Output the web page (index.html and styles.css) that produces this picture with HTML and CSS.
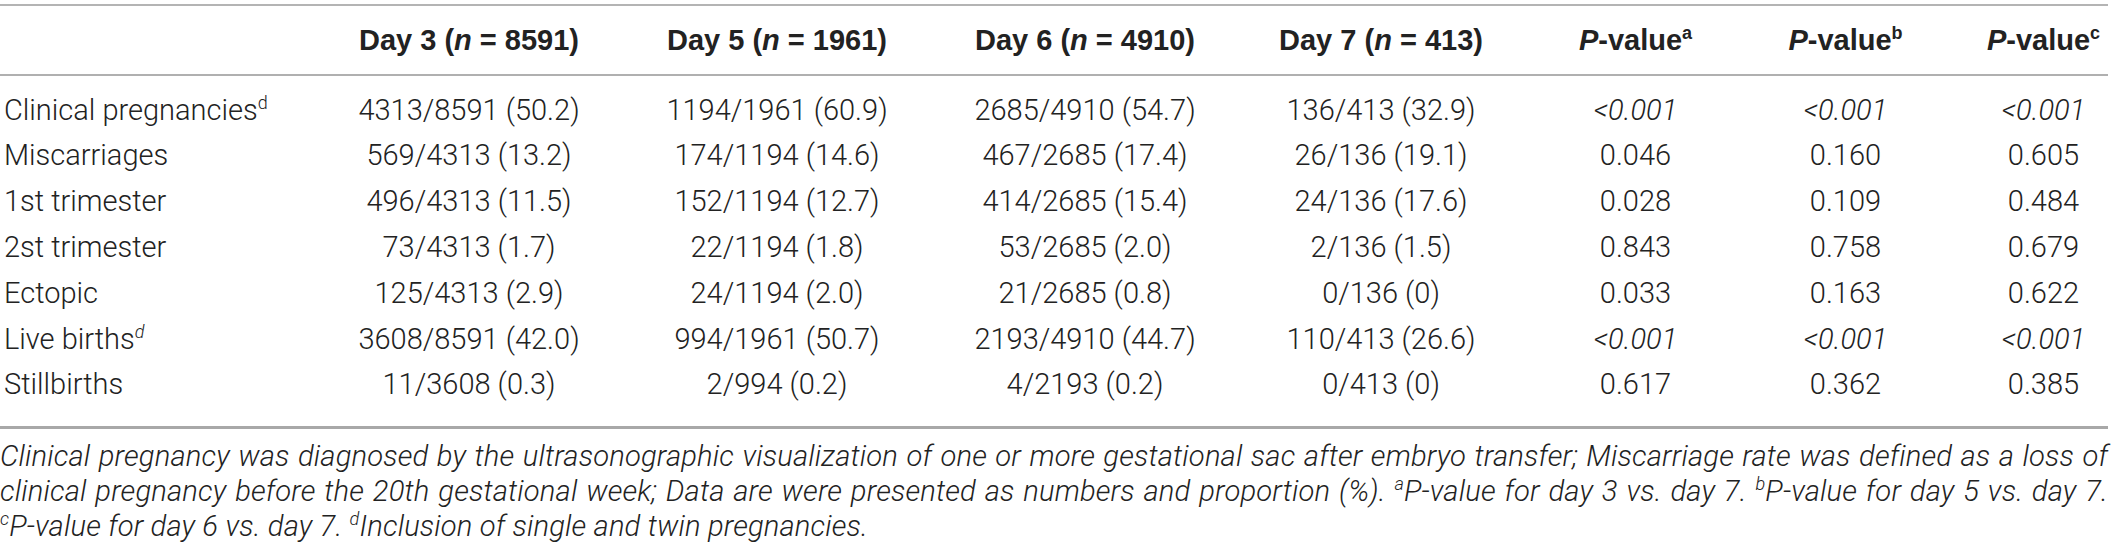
FILE: index.html
```html
<!DOCTYPE html>
<html lang="en">
<head>
    <meta charset="UTF-8">
    <title>Pregnancy outcomes by day of embryo transfer</title>
    <link rel="stylesheet" href="styles.css">
</head>
<body>
    <div class="table-wrap">
        <table class="outcomes">
            <colgroup>
                <col class="col-label">
                <col class="col-day">
                <col class="col-day">
                <col class="col-day">
                <col class="col-day7">
                <col class="col-pa">
                <col class="col-pb">
                <col class="col-pc">
            </colgroup>
            <thead>
                <tr>
                    <th class="label"></th>
                    <th>Day 3 (<i>n</i> = 8591)</th>
                    <th>Day 5 (<i>n</i> = 1961)</th>
                    <th>Day 6 (<i>n</i> = 4910)</th>
                    <th>Day 7 (<i>n</i> = 413)</th>
                    <th><i>P</i>-value<sup>a</sup></th>
                    <th><i>P</i>-value<sup>b</sup></th>
                    <th><i>P</i>-value<sup>c</sup></th>
                </tr>
            </thead>
            <tbody>
                <tr>
                    <td class="label">Clinical pregnancies<sup>d</sup></td>
                    <td>4313/8591 (50.2)</td>
                    <td>1194/1961 (60.9)</td>
                    <td>2685/4910 (54.7)</td>
                    <td>136/413 (32.9)</td>
                    <td><i>&lt;0.001</i></td>
                    <td><i>&lt;0.001</i></td>
                    <td><i>&lt;0.001</i></td>
                </tr>
                <tr>
                    <td class="label">Miscarriages</td>
                    <td>569/4313 (13.2)</td>
                    <td>174/1194 (14.6)</td>
                    <td>467/2685 (17.4)</td>
                    <td>26/136 (19.1)</td>
                    <td>0.046</td>
                    <td>0.160</td>
                    <td>0.605</td>
                </tr>
                <tr>
                    <td class="label">1st trimester</td>
                    <td>496/4313 (11.5)</td>
                    <td>152/1194 (12.7)</td>
                    <td>414/2685 (15.4)</td>
                    <td>24/136 (17.6)</td>
                    <td>0.028</td>
                    <td>0.109</td>
                    <td>0.484</td>
                </tr>
                <tr>
                    <td class="label">2st trimester</td>
                    <td>73/4313 (1.7)</td>
                    <td>22/1194 (1.8)</td>
                    <td>53/2685 (2.0)</td>
                    <td>2/136 (1.5)</td>
                    <td>0.843</td>
                    <td>0.758</td>
                    <td>0.679</td>
                </tr>
                <tr>
                    <td class="label">Ectopic</td>
                    <td>125/4313 (2.9)</td>
                    <td>24/1194 (2.0)</td>
                    <td>21/2685 (0.8)</td>
                    <td>0/136 (0)</td>
                    <td>0.033</td>
                    <td>0.163</td>
                    <td>0.622</td>
                </tr>
                <tr>
                    <td class="label">Live births<sup><i>d</i></sup></td>
                    <td>3608/8591 (42.0)</td>
                    <td>994/1961 (50.7)</td>
                    <td>2193/4910 (44.7)</td>
                    <td>110/413 (26.6)</td>
                    <td><i>&lt;0.001</i></td>
                    <td><i>&lt;0.001</i></td>
                    <td><i>&lt;0.001</i></td>
                </tr>
                <tr>
                    <td class="label">Stillbirths</td>
                    <td>11/3608 (0.3)</td>
                    <td>2/994 (0.2)</td>
                    <td>4/2193 (0.2)</td>
                    <td>0/413 (0)</td>
                    <td>0.617</td>
                    <td>0.362</td>
                    <td>0.385</td>
                </tr>
            </tbody>
        </table>
        <p class="footnote">Clinical pregnancy was diagnosed by the ultrasonographic visualization of one or more gestational sac after embryo transfer; Miscarriage rate was defined as a loss of clinical pregnancy before the 20th gestational week; Data are were presented as numbers and proportion (%). <span class="ref"><sup>a</sup>P-value</span> for day 3 vs. day 7. <span class="ref"><sup>b</sup>P-value</span> for day 5 vs. day 7. <span class="ref"><sup>c</sup>P-value</span> for day 6 vs. day 7. <sup>d</sup>Inclusion of single and twin pregnancies.</p>
    </div>
</body>
</html>
```

FILE: styles.css
```css
body {
    margin: 0;
    background-color: #fff;
    color: #222;
    font-family: Roboto, "Liberation Sans", Arial, sans-serif;
    font-weight: 300;
}
.table-wrap {
    width: 2108px;
    padding-top: 4px;
}
.outcomes {
    width: 100%;
    table-layout: fixed;
    border-collapse: collapse;
    font-size: 29px;
    border-top: 2px solid #b4b4b4;
    border-bottom: 3px solid #a8a8a8;
}
.col-label { width: 315px; }
.col-day { width: 308px; }
.col-day7 { width: 284px; }
.col-pa { width: 225px; }
.col-pb { width: 195px; }
.col-pc { width: 165px; }

.outcomes thead tr {
    border-bottom: 2px solid #b0b0b0;
}
.outcomes th,
.outcomes td {
    box-sizing: border-box;
    padding: 0;
    text-align: center;
    white-space: nowrap;
}
.outcomes th {
    font-family: "Liberation Sans", Arial, sans-serif;
    font-weight: bold;
    height: 70px;
}
.outcomes td {
    height: 46px;
}
.outcomes th:last-child,
.outcomes td:last-child {
    padding-left: 36px;
}
.outcomes tbody tr:first-child td {
    height: 57px;
    padding-top: 11px;
}
.outcomes tbody tr:first-child td:last-child {
    padding-left: 36px;
}
.outcomes tbody tr:last-child td {
    height: 65px;
    padding-bottom: 19px;
}
.outcomes .label {
    text-align: left;
    padding-left: 4px;
}
sup {
    font-size: 0.62em;
    line-height: 0;
}
.footnote {
    margin: 10px 0 0;
    font-size: 29.2px;
    letter-spacing: 0.15px;
    line-height: 35px;
    font-style: italic;
    text-align: justify;
}
.footnote .ref {
    white-space: nowrap;
}
```
